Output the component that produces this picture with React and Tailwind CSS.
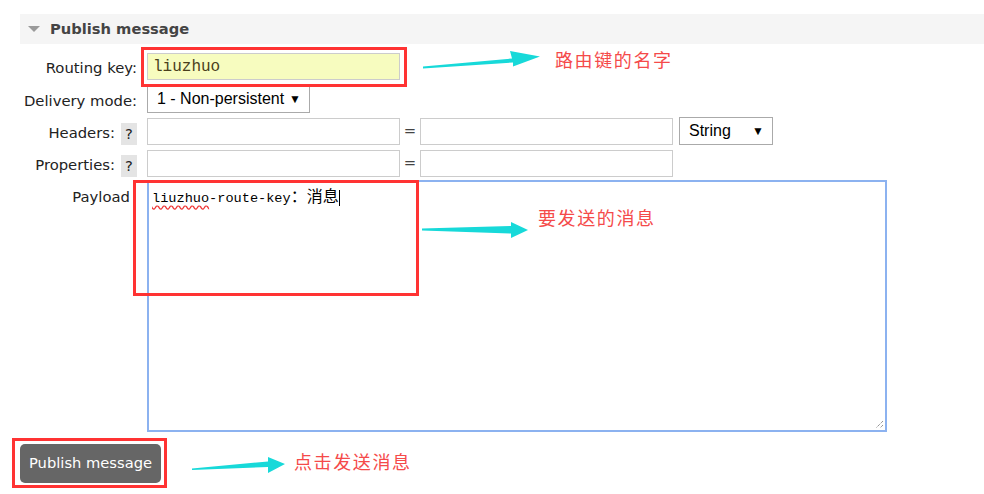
import React from 'react';

// --- annotations drawn over the form ---
const ARROWS = [
  '423,66.5 512,58.5 510,51 540,56.5 513,66.5 513,62.5 423,68.5',
  '422,228.5 511,226 511,222 528,230 511,238 511,233.5 422,230.5',
  '192,468.5 268,461.5 268,457 285,464 268,473 268,467 192,470',
];

const NOTES = [
  { text: '路由键的名字', cls: 'left-[555px] top-[46px]' },
  { text: '要发送的消息', cls: 'left-[538px] top-[204px]' },
  { text: '点击发送消息', cls: 'left-[294px] top-[448px]' },
];

const labelCls = "w-[138px] h-full flex justify-end items-center pr-[1px] pt-[4px] text-[#222]";
const inputCls = "w-[253px] h-[27px] border border-[#ccc] bg-white";

const Help = () => (
  <span className="ml-[6px] mt-[2px] w-[16px] h-[22px] bg-[#e4e4e4] flex items-center justify-center text-[#222]">?</span>
);

const Select = ({ value, w }) => (
  <div className={`${w} h-[28px] border border-[#aaa] bg-white flex items-center justify-between pl-[9px] pr-[8px] font-['Liberation_Sans',Arial,sans-serif] text-[16px] text-black`}>
    <span>{value}</span>
    <span className="text-[12px]">▼</span>
  </div>
);

export default function App() {
  return (
    <div className="relative w-[984px] h-[494px] bg-white overflow-hidden font-['DejaVu_Sans',Verdana,sans-serif] text-[14.8px]">
      {/* section header */}
      <div className="mt-[14px] ml-[20px] h-[30px] bg-[#f5f5f5] flex items-center">
        <span className="ml-[8px] w-0 h-0 border-l-[6px] border-r-[6px] border-t-[6px] border-l-transparent border-r-transparent border-t-[#9a9a9a]"></span>
        <span className="ml-[10px] font-bold text-[14.7px] text-[#444]">Publish message</span>
      </div>

      <div className="mt-[9px] flex flex-col">
        <div className="flex items-center h-[27px]">
          <div className={labelCls}>Routing key:</div>
          <div className="ml-[9px] w-[253px] h-[27px] border border-[#ccc] bg-[#f7fcbf] flex items-center pl-[5px] font-['Liberation_Mono','Courier_New',monospace] text-[16px] text-[#4a3f1c]">liuzhuo</div>
        </div>

        <div className="mt-[5px] flex items-center h-[28px]">
          <div className={labelCls}>Delivery mode:</div>
          <div className="ml-[9px]"><Select value="1 - Non-persistent" w="w-[163px]" /></div>
        </div>

        <div className="mt-[4px] flex items-center h-[28px]">
          <div className={labelCls}>Headers:<Help /></div>
          <div className={`ml-[9px] ${inputCls}`}></div>
          <span className="w-[20px] text-center text-[#444]">=</span>
          <div className={inputCls}></div>
          <div className="ml-[6px]"><Select value="String" w="w-[94px]" /></div>
        </div>

        <div className="mt-[5px] flex items-center h-[26px]">
          <div className={labelCls}>Properties:<Help /></div>
          <div className={`ml-[9px] ${inputCls} h-[26px]`}></div>
          <span className="w-[20px] text-center text-[#444]">=</span>
          <div className={`${inputCls} h-[26px]`}></div>
        </div>

        <div className="mt-[4px] flex items-start">
          <div className="w-[138px] flex justify-end pr-[8px] pt-[6px] text-[#222]">Payload</div>
          <div className="ml-[9px] relative w-[740px] h-[252px] border-2 border-[#8cb2f0] bg-white pl-[3px] pt-[1px]">
            <span className="font-['Liberation_Mono','Courier_New',monospace] text-[13.6px] text-black">
              <span className="underline decoration-wavy decoration-[#e33] underline-offset-[3px]">liuzhuo</span>-route-key
            </span>
            <span className="font-['Noto_Sans_CJK_SC',sans-serif] text-[16px] text-black">：消息</span>
            <span className="inline-block align-middle w-[1px] h-[16px] bg-black"></span>
            <svg className="absolute right-[1px] bottom-[1px]" width="10" height="10" viewBox="0 0 10 10">
              <path d="M9 2 L2 9 M9 6 L6 9" stroke="#666" strokeWidth="1" strokeDasharray="1 1" />
            </svg>
          </div>
        </div>

        <div className="mt-[12px] ml-[20px]">
          <button className="w-[141px] h-[39px] rounded-[5px] bg-[#666] text-white text-[14.7px]">Publish message</button>
        </div>
      </div>

      {/* red highlight boxes */}
      <div className="absolute left-[141px] top-[47px] w-[266px] h-[40px] border-[3px] border-[#f33]"></div>
      <div className="absolute left-[133px] top-[180px] w-[286px] h-[116px] border-[3px] border-[#f33]"></div>
      <div className="absolute left-[12px] top-[438px] w-[155px] h-[50px] border-[3px] border-[#f33]"></div>

      <svg className="absolute left-0 top-0" width="984" height="494">
        {ARROWS.map((p, i) => <polygon key={i} points={p} fill="#17d9d9" />)}
      </svg>

      {NOTES.map(n => (
        <div key={n.text} className={`absolute ${n.cls} font-['Noto_Sans_CJK_SC',sans-serif] text-[18px] tracking-[1.6px] text-[#f54a4a]`}>{n.text}</div>
      ))}
    </div>
  );
}
